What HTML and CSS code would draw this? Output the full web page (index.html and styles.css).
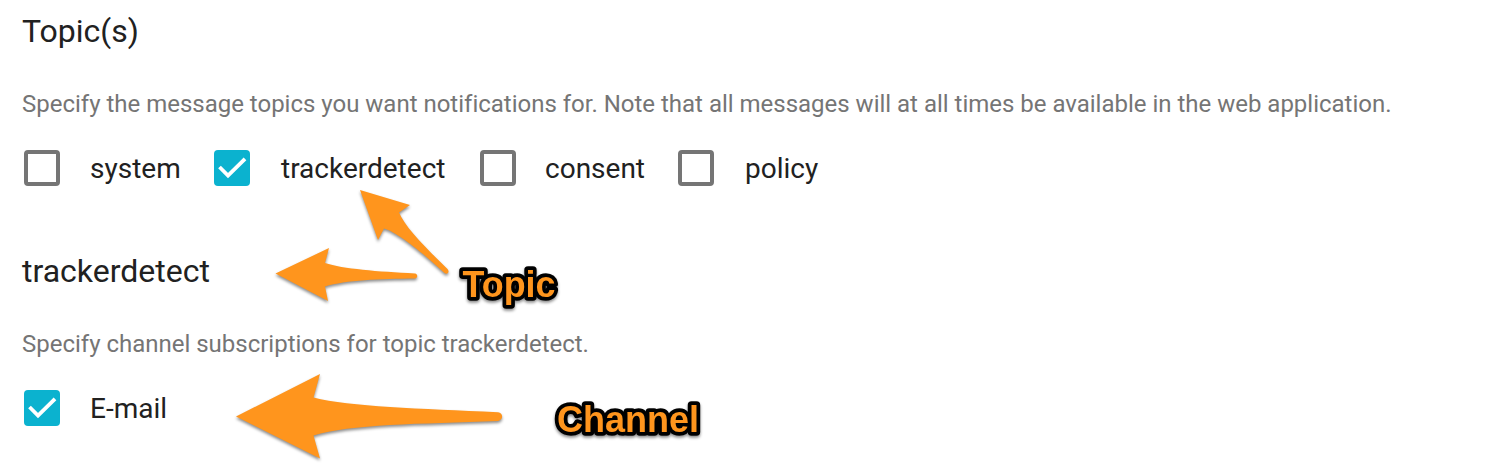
FILE: index.html
```html
<!DOCTYPE html>
<html lang="en">
<head>
<meta charset="utf-8">
<title>Notification topics</title>
<link rel="stylesheet" href="styles.css">
</head>
<body>
<main class="page">
  <section class="group">
    <h2 class="title">Topic(s)</h2>
    <p class="hint">Specify the message topics you want notifications for. Note that all messages will at all times be available in the web application.</p>
    <div class="options">
      <label class="option option-system"><span class="box"></span><span class="label">system</span></label>
      <label class="option option-tracker"><span class="box checked"><svg viewBox="0 0 36 36"><path d="M5.500 17L14 25.500L31 8.800"/></svg></span><span class="label">trackerdetect</span></label>
      <label class="option option-consent"><span class="box"></span><span class="label">consent</span></label>
      <label class="option option-policy"><span class="box"></span><span class="label">policy</span></label>
    </div>
  </section>
  <section class="group">
    <h2 class="title">trackerdetect</h2>
    <p class="hint">Specify channel subscriptions for topic trackerdetect.</p>
    <div class="options">
      <label class="option"><span class="box checked"><svg viewBox="0 0 36 36"><path d="M5.500 17L14 25.500L31 8.800"/></svg></span><span class="label">E-mail</span></label>
    </div>
  </section>
  <svg class="annotations" viewBox="0 0 1504 470">
    <g class="arrows">
      <path d="M360 190L410 205L399 212.500C405 227 425 247 447.500 269C450 272 447.500 275 444.500 273C423 253 397 232 384 228.500L378 240Z"/>
      <path d="M275.500 273.500L329 248L325 263C343 269 378 271.500 415 273.500C418 274 418 278 415 278.500C380 279 346 280 325 286.500L328 301Z"/>
      <path d="M236 416.500L320 374L313.500 397.500C350 407 420 408.500 498 412.200C503.500 413 503.500 420 498 421C420 424 350 424 313.500 435.500L320 458.500Z"/>
    </g>
    <g class="captions">
      <text x="462.500" y="296.500" textLength="93" lengthAdjust="spacingAndGlyphs">Topic</text>
      <text x="557" y="432" textLength="142" lengthAdjust="spacingAndGlyphs">Channel</text>
    </g>
  </svg>
</main>
</body>
</html>
```
FILE: styles.css
```css
body {
  margin: 0;
  background: #fff;
  color: #212121;
  font-family: Roboto, "Liberation Sans", sans-serif;
}
.page {
  position: relative;
  height: 470px;
  overflow: hidden;
}
.group {
  display: flex;
  flex-direction: column;
  height: 240px;
  box-sizing: border-box;
  padding: 11px 0 0 22px;
}
.title {
  margin: 0;
  font-size: 32px;
  font-weight: 400;
  line-height: 40px;
  white-space: nowrap;
}
.hint {
  margin: 37px 0 0;
  color: #757575;
  font-size: 24px;
  line-height: 32px;
  letter-spacing: -0.008px;
  white-space: nowrap;
}
.options {
  display: flex;
  margin: 30px 0 0 2px;
}
.option {
  display: flex;
  align-items: center;
  gap: 30px;
  height: 36px;
  margin-right: 34px;
}
.option-system {
  width: 156px;
}
.option-tracker {
  width: 232px;
  gap: 31px;
}
.option-consent {
  width: 164px;
  gap: 29px;
}
.option-policy {
  gap: 31px;
}
.box {
  flex: none;
  width: 36px;
  height: 36px;
  box-sizing: border-box;
  border: 4px solid #757575;
  border-radius: 4px;
}
.checked {
  border: 0;
  background: #0bb2cf;
}
.box svg {
  display: block;
}
.box path {
  fill: none;
  stroke: #fff;
  stroke-width: 3.8;
}
.label {
  padding-top: 2px;
  font-size: 28px;
  line-height: 36px;
  white-space: nowrap;
}
.annotations {
  position: absolute;
  inset: 0;
  width: 1504px;
  height: 470px;
  pointer-events: none;
}
.arrows {
  fill: #ff951d;
  filter: drop-shadow(0 2px 1.5px rgba(0, 0, 0, 0.45));
}
.captions {
  fill: #ff951d;
  stroke: #000;
  stroke-width: 7.5px;
  stroke-linejoin: round;
  paint-order: stroke;
  font-family: "Liberation Sans", sans-serif;
  font-size: 36px;
  font-weight: 700;
  filter: drop-shadow(0 2px 1.5px rgba(0, 0, 0, 0.45));
}
```
